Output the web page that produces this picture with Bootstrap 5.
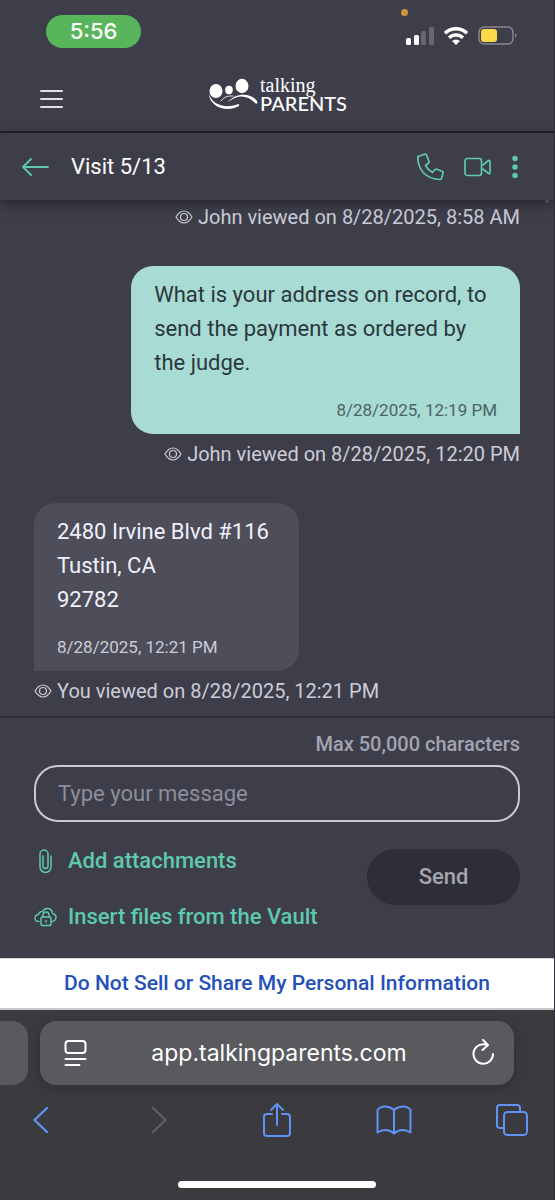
<!DOCTYPE html>
<html lang="en">
<head>
<meta charset="utf-8">
<meta name="viewport" content="width=device-width, initial-scale=1">
<title>Visit 5/13 - TalkingParents</title>
<link href="https://cdn.jsdelivr.net/npm/bootstrap@5.3.0/dist/css/bootstrap.min.css" rel="stylesheet">
<script src="https://cdn.jsdelivr.net/npm/bootstrap@5.3.0/dist/js/bootstrap.bundle.min.js" defer></script>
<style>
  :root { --app: #3d3e4a; --mint: #5fc9ad; --pale: #cbccd8; --chrome: #3a3a3f; --blue: #5f93f5; }
  body { background: var(--app); color: #f1f1fb; font-family: Roboto, "Liberation Sans", sans-serif; font-size: 22px; line-height: 34px; }
  svg { display: block; flex: none; fill: none; stroke: currentColor; stroke-linecap: round; stroke-linejoin: round; }
  .screen { border-right: 1px solid #2e2f39; }
  .plain { background: none; border: 0; padding: 0; color: inherit; }
  .status-bar { padding: 15px 37px 0 46px; height: 64px; }
  .clock { background: #58b55c; color: #fff; border-radius: 17px; width: 95px; height: 33px; line-height: 33px; font-family: Inter, sans-serif; font-size: 22px; font-weight: 500; text-align: center; }
  .signals { height: 42px; color: #fff; }
  .mic-dot { position: absolute; left: 73%; top: 9px; width: 7px; height: 7px; margin-left: -3px; border-radius: 50%; background: #cf9436; }
  .brand-row { height: 67px; padding: 2px 38px 0 39px; color: #dfe0ec; }
  .brand-side { width: 25px; }
  .brand-talking { font: 20px/18px "Liberation Serif", serif; }
  .brand-parents { font: 500 20px/18px Lato, sans-serif; }
  .thread-bar { height: 69px; padding: 0 36px 0 22px; border-top: 2px solid #1d1e26; box-shadow: 0 5px 10px -1px #24252e; z-index: 1; background: var(--app); }
  .thread-title { font-size: 22px; line-height: 34px; font-weight: 400; padding-left: 22px; }
  .call-tools { gap: 20px; }
  .mint { color: var(--mint); }
  .thread { padding: 2px 34px 9px; }
  .scroll-dot { position: absolute; right: 5px; top: 0; width: 4px; height: 3px; border-radius: 0 0 3px 3px; background: #8f909c; }
  .receipt { color: var(--pale); font-size: 20px; line-height: 30px; gap: 5px; margin-top: 5px; }
  .bubble { padding: 12px 23px; border-radius: 22px; }
  .bubble-out { background: #a8dbd4; color: #2b373d; border-bottom-right-radius: 0; width: 80%; margin-top: 34px; }
  .bubble-in { background: #4d4e5a; border-bottom-left-radius: 0; min-width: 265px; margin-top: 34px; }
  .stamp { font-size: 17px; line-height: 24px; margin-top: 18px; }
  .bubble-out .stamp { color: #4c6366; }
  .bubble-in .stamp { color: var(--pale); }
  .composer { border-top: 2px solid #2e2f39; padding: 11px 34px 24px; }
  .limit { color: #a3a4b1; font-size: 20px; line-height: 30px; font-weight: 500; }
  .message-box, .message-box:focus { background: transparent; border: 2px solid #c9cad6; border-radius: 24px; height: 57px; padding: 0 22px; font-size: 22px; color: #f1f1fb; margin-top: 6px; }
  .message-box::placeholder { color: #8d8e9b; opacity: 1; }
  .composer-tools { margin-top: 22px; }
  .attach-links { gap: 22px; }
  .tool-link { font-weight: 500; gap: 11px; height: 34px; }
  .send-btn, .send-btn:disabled { width: 153px; height: 56px; margin-top: 5px; border: 0; border-radius: 28px; background: #2d2e38; color: #a5a6b2; font-size: 22px; font-weight: 500; opacity: 1; }
  .privacy { background: #fff; border-top: 1px solid #d5d5da; border-bottom: 2px solid #c9c9cc; height: 52px; }
  .privacy a { color: #2450b8; font: 500 21px/30px Roboto, sans-serif; text-decoration: none; padding-bottom: 2px; }
  .browser { background: var(--chrome); height: 190px; padding-top: 11px; }
  .tab-edge { width: 28px; height: 64px; background: #59595e; border-radius: 0 16px 16px 0; }
  .address { height: 64px; background: #59595e; border-radius: 16px; margin: 0 40px 0 12px; padding: 0 18px 0 24px; color: #fff; box-shadow: 0 3px 12px #303034; }
  .host { color: #fff; font: 23px/30px Inter, sans-serif; }
  .tools { color: var(--blue); padding: 17px 24px 0 23px; }
  .tools .plain { width: 36px; display: flex; justify-content: center; }
  .tools .plain:disabled { color: #5f5f65; }
  .home-bar { width: 198px; height: 7px; border-radius: 4px; background: #fff; margin: 43px auto 0; }
</style>
</head>
<body>
<div class="screen d-flex flex-column min-vh-100">
  <div class="status-bar position-relative d-flex justify-content-between">
    <span class="mic-dot"></span>
    <div class="clock">5:56</div>
    <div class="signals d-flex align-items-center">
      <svg width="29" height="20" viewBox="0 0 29 20"><g fill="#fff" stroke="none"><rect x="0" y="12" width="5" height="7" rx="1.500"/><rect x="8" y="9" width="5" height="10" rx="1.500"/></g><g fill="#666773" stroke="none"><rect x="15" y="5" width="5" height="14" rx="1.500"/><rect x="23" y="1" width="5" height="18" rx="1.500"/></g></svg>
      <svg class="ms-2" width="26" height="20" viewBox="0 0 26 20" stroke-width="3.400"><path d="M2 7.300a15.500 15.500 0 0 1 22 0M6 11.800a10 10 0 0 1 14 0" stroke-linecap="butt"/><path d="M9 15a6 6 0 0 1 8 0L13 19z" fill="#fff" stroke="none"/></svg>
      <svg class="ms-2" width="40" height="20" viewBox="0 0 40 20"><rect x="2" y="1" width="34" height="17" rx="5" stroke="#85868f" stroke-width="1.500"/><rect x="4" y="3" width="16" height="13" rx="3" fill="#fbd84a" stroke="none"/><path d="M38 7q3 2.500 0 5z" fill="#85868f" stroke="none"/></svg>
    </div>
  </div>

  <header class="brand-row d-flex align-items-center justify-content-between">
    <button class="plain brand-side" type="button" aria-label="Menu">
      <svg width="25" height="24" viewBox="0 0 25 24" stroke-width="2"><path d="M2 4h21M2 12h21M2 20h21"/></svg>
    </button>
    <a class="text-white d-flex text-decoration-none mb-2" href="#">
      <svg width="52" height="38" viewBox="0 0 52 38" aria-hidden="true"><g fill="#fff" stroke="none"><ellipse cx="8" cy="15" rx="6.500" ry="7"/><ellipse cx="21" cy="14" rx="3.800" ry="4.200"/><ellipse cx="34" cy="10" rx="6.500" ry="7.200"/><path d="M1 18C4 28 16 33 29 28.500Q32 27 31 30C24 34 14 34 7 29Q1 24 1 18z"/><path d="M20 26C27 17 42 16 49 25Q50 29 47 27C38 18 29 19 20 26z"/></g><path d="M13 25Q17 19 25 20" stroke-width=".8"/></svg>
      <span><span class="brand-talking d-block">talking</span><span class="brand-parents d-block">PARENTS</span></span>
    </a>
    <span class="brand-side"></span>
  </header>

  <nav class="thread-bar position-relative d-flex align-items-center mint">
    <button class="plain" type="button" aria-label="Back"><svg width="27" height="20" viewBox="0 0 27 20" stroke-width="1.800"><path d="M26 10H1M9 2L1 10l8 8"/></svg></button>
    <h1 class="thread-title mb-0 flex-grow-1 text-white">Visit 5/13</h1>
    <div class="call-tools d-flex align-items-center">
      <button class="plain" type="button" aria-label="Call"><svg width="27" height="28" viewBox="0 0 27 28" stroke-width="1.700"><path d="M1 3.500L8 1Q9 1 9.500 2L12 8.500Q12 9.500 11.500 10L8.500 12.500Q11 17 15.500 19.500L18 16.500Q19 16 20 16.300L25.500 18.500Q26.500 19 26 20L24.500 25.500Q24 26.500 23 26.500C9 26 1 17 .8 4.500Q.7 4 1 3.500z"/></svg></button>
      <button class="plain" type="button" aria-label="Video call"><svg width="28" height="20" viewBox="0 0 28 20" stroke-width="1.700"><rect x="1" y="1.500" width="16.500" height="17" rx="2.500"/><path d="M19 8L24.500 3.500Q26 3 26 4.500V15.500Q26 17 24.500 16.500L19 12"/></svg></button>
      <button class="plain" type="button" aria-label="More"><svg width="6" height="24" viewBox="0 0 6 24"><g fill="currentColor" stroke="none"><circle cx="3" cy="3.500" r="2.700"/><circle cx="3" cy="12" r="2.700"/><circle cx="3" cy="20.500" r="2.700"/></g></svg></button>
    </div>
  </nav>

  <svg width="0" height="0" class="position-absolute"><symbol id="eye" viewBox="0 0 18 16"><path d="M1 8Q4.500 2 9 2T17 8Q13.500 14 9 14T1 8z"/><circle cx="9" cy="8" r="3.500"/></symbol></svg>
  <main class="thread position-relative d-flex flex-column flex-grow-1">
    <span class="scroll-dot"></span>
    <div class="receipt mt-0 d-flex align-items-center justify-content-end"><svg width="18" height="16" stroke-width="1.200" aria-hidden="true"><use href="#eye"/></svg>John viewed on 8/28/2025, 8:58 AM</div>
    <div class="bubble bubble-out align-self-end">What is your address on record, to send the payment as ordered by the judge.<div class="stamp text-end">8/28/2025, 12:19 PM</div></div>
    <div class="receipt d-flex align-items-center justify-content-end"><svg width="18" height="16" stroke-width="1.200" aria-hidden="true"><use href="#eye"/></svg>John viewed on 8/28/2025, 12:20 PM</div>
    <div class="bubble bubble-in align-self-start">2480 Irvine Blvd #116<br>Tustin, CA<br>92782<div class="stamp">8/28/2025, 12:21 PM</div></div>
    <div class="receipt d-flex align-items-center"><svg width="18" height="16" stroke-width="1.200" aria-hidden="true"><use href="#eye"/></svg>You viewed on 8/28/2025, 12:21 PM</div>
  </main>

  <form class="composer">
    <label class="limit d-block text-end" for="message">Max 50,000 characters</label>
    <input class="form-control message-box" id="message" type="text" placeholder="Type your message">
    <div class="composer-tools d-flex justify-content-between align-items-start">
      <div class="attach-links d-flex flex-column">
        <button class="plain tool-link mint d-flex align-items-center" type="button"><svg width="23" height="26" viewBox="0 0 23 26" stroke-width="1.500"><path d="M17 8v11a5.500 5.500 0 0 1-11 0V6a4 4 0 0 1 8 0v12a2.500 2.500 0 0 1-5 0V8"/></svg>Add attachments</button>
        <button class="plain tool-link mint d-flex align-items-center" type="button"><svg width="23" height="22" viewBox="0 0 23 22" stroke-width="1.400"><path d="M5 15.500C0 15.500-.5 9 4.500 8.500Q5 5.500 8.500 5.500 10.500 2 14 2.500 18 3 18.500 7.500 22.500 8.500 22 12 21.500 15 18 15.500"/><rect x="7" y="11" width="10" height="8.500" rx="1"/><path d="M9 11V9a3 3 0 0 1 6 0v2M12 14.500v1.500"/></svg>Insert files from the Vault</button>
      </div>
      <button class="send-btn" type="submit" disabled>Send</button>
    </div>
  </form>

  <div class="privacy d-flex align-items-center justify-content-center"><a href="#">Do Not Sell or Share My Personal Information</a></div>

  <footer class="browser">
    <div class="d-flex">
      <div class="tab-edge"></div>
      <div class="address d-flex align-items-center justify-content-between flex-grow-1">
        <button class="plain" type="button" aria-label="Page menu"><svg width="23" height="28" viewBox="0 0 23 28" stroke-width="2"><rect x="1.500" y="2" width="20" height="12" rx="3"/><path d="M1.500 20h20M1.500 26h14"/></svg></button>
        <a class="host text-decoration-none" href="#">app.talkingparents.com</a>
        <button class="plain" type="button" aria-label="Reload"><svg width="25" height="28" viewBox="0 0 25 28" stroke-width="2"><path d="M22 15a9.800 9.800 0 1 1-9.500-9.800L17 6M12 1l5 5-5.500 5"/></svg></button>
      </div>
    </div>
    <div class="tools d-flex justify-content-between align-items-center">
      <button class="plain" type="button" aria-label="Back"><svg width="18" height="28" viewBox="0 0 18 28" stroke-width="2.300"><path d="M15 2L2.500 14 15 26"/></svg></button>
      <button class="plain" type="button" aria-label="Forward" disabled><svg width="18" height="28" viewBox="0 0 18 28" stroke-width="2.300"><path d="M3 2l12.500 12L3 26"/></svg></button>
      <button class="plain" type="button" aria-label="Share"><svg width="30" height="36" viewBox="0 0 30 36" stroke-width="2"><path d="M10 12H5Q2 12 2 15v16q0 3 3 3h20q3 0 3-3V15q0-3-3-3h-5M15 23V2M9 8l6-6 6 6"/></svg></button>
      <button class="plain" type="button" aria-label="Bookmarks"><svg width="36" height="30" viewBox="0 0 36 30" stroke-width="2"><path d="M18 5Q14 1.500 9 1.500 4 1.500 1.500 5V27.500Q5 25 9.500 25T18 28.500Q22 25 26.500 25T34.500 27.500V5Q32 1.500 27 1.500T18 5v23"/></svg></button>
      <button class="plain" type="button" aria-label="Tabs"><svg width="34" height="34" viewBox="0 0 34 34" stroke-width="2"><path d="M9 25H5Q2 25 2 22V5q0-3 3-3h17q3 0 3 3v4"/><rect x="9" y="9" width="23" height="23" rx="3.500"/></svg></button>
    </div>
    <div class="home-bar"></div>
  </footer>
</div>
</body>
</html>
